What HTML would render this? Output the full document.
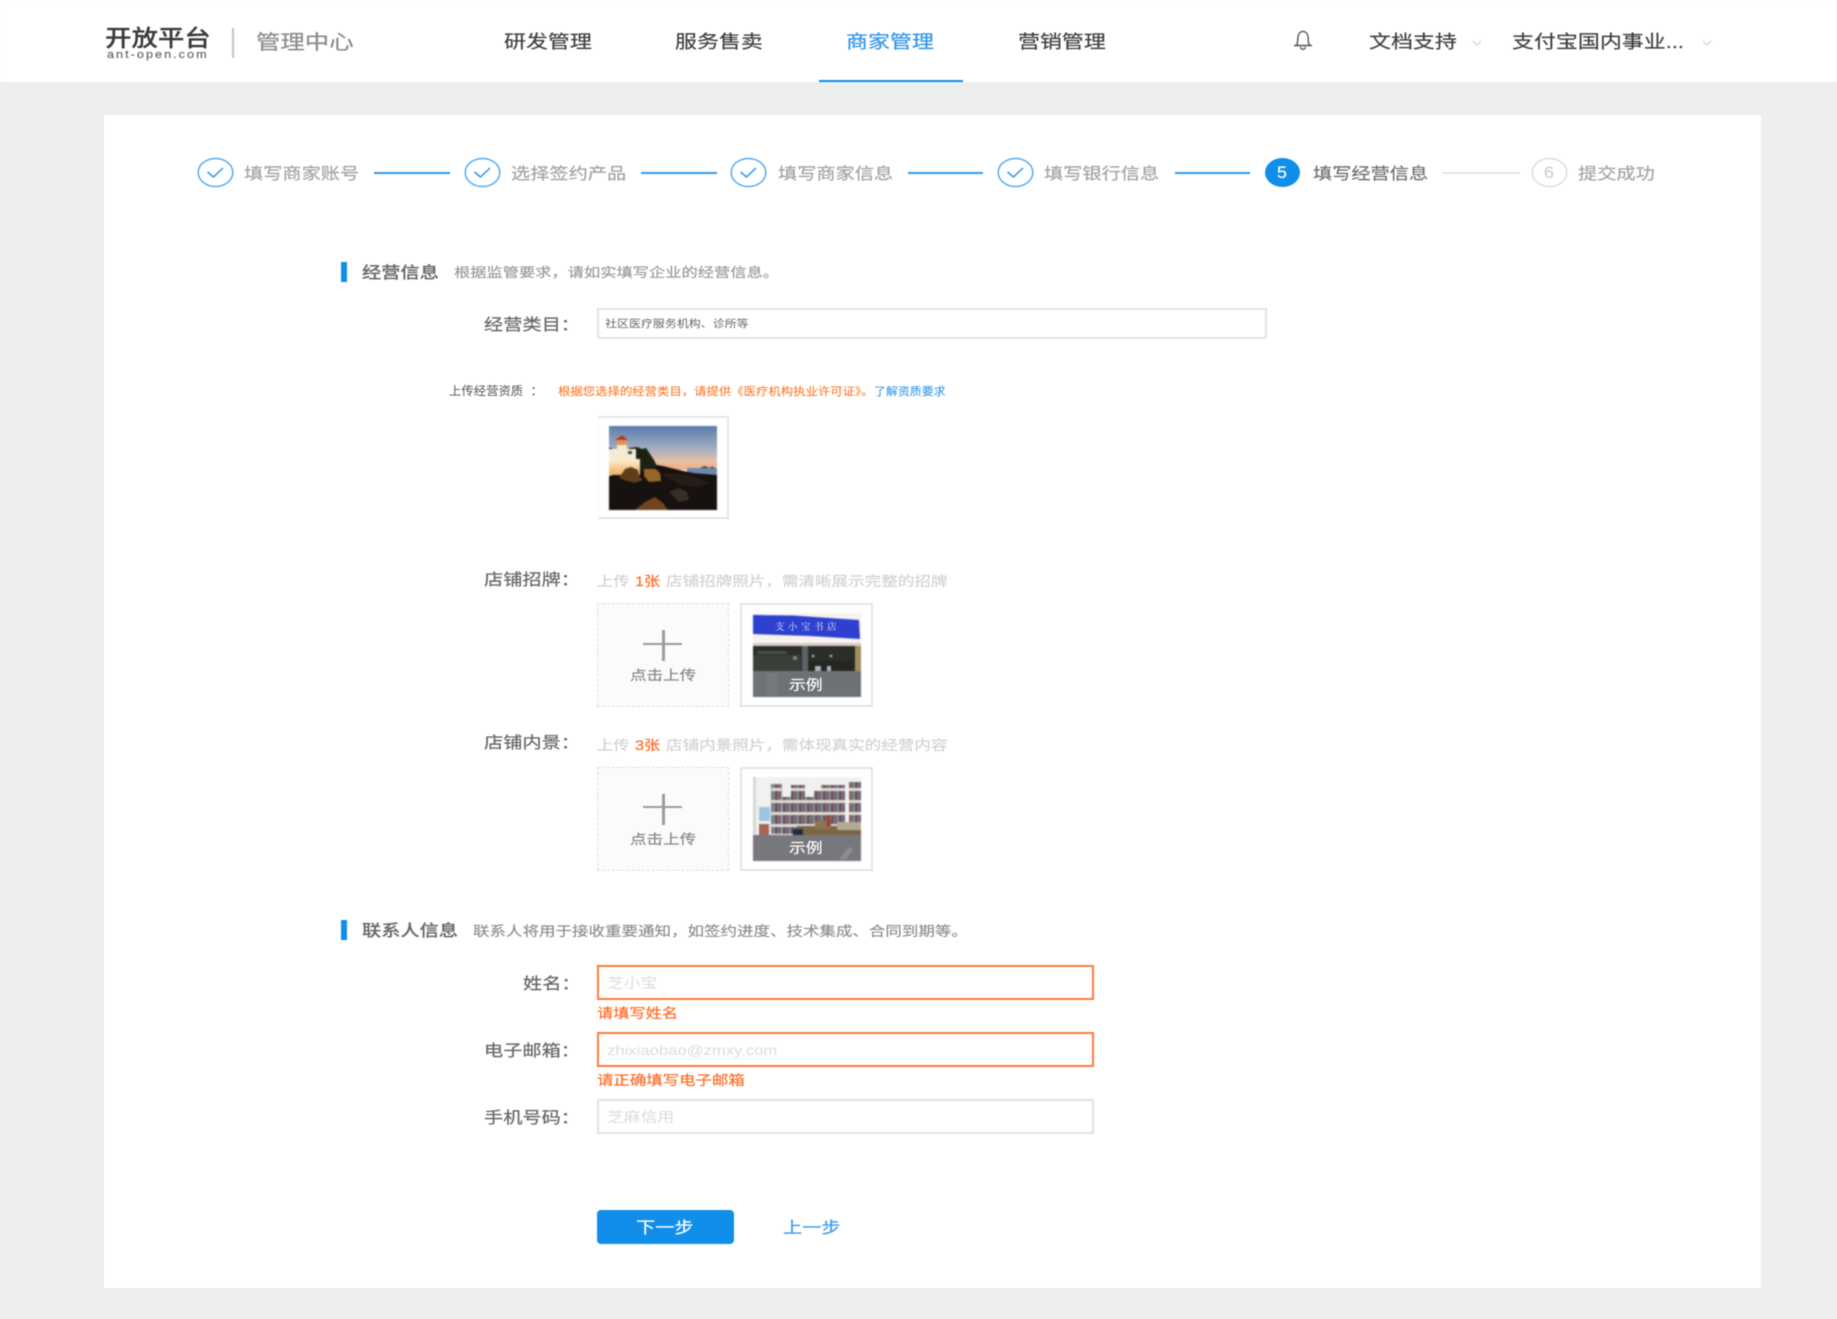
<!DOCTYPE html>
<html lang="zh-CN">
<head>
<meta charset="utf-8">
<title>开放平台 管理中心</title>
<style>
html,body{margin:0;padding:0;width:1837px;height:1319px;overflow:hidden;background:#edefef;}
body{position:relative;font-family:"Liberation Sans","Noto Sans CJK SC",sans-serif;color:#666;}
#wrap{position:absolute;left:0;top:0;width:1837px;height:1319px;filter:blur(.4px);}
.b{position:absolute;box-sizing:border-box;}
.t{position:absolute;white-space:nowrap;line-height:1;transform-origin:0 50%;transform:scaleX(1.2);-webkit-text-stroke:.18px currentColor;}
.nav{font-size:18px;color:#3f3f3f;transform:scaleX(1.22);}
.st{font-size:16px;color:#a3a3a3;}
.ln{position:absolute;top:172px;height:2px;background:#2f9bec;}
.lab{font-size:16px;color:#666;}
.ph{font-size:14px;color:#dcdcdc;-webkit-text-stroke:0;}
.err{font-size:13.5px;color:#ff6a26;}
.thin{-webkit-text-stroke:0;}
.ipt{position:absolute;left:597px;width:497px;height:35px;box-sizing:border-box;background:#fff;}
.e{border:2px solid #ff7a3e;}
.n{border:2px solid #e2e2e2;}
svg{position:absolute;display:block;}
.img{filter:blur(.55px);}
</style>
</head>
<body>
<div id="wrap">
<!-- header -->
<div class="b" style="left:0;top:0;width:1837px;height:82px;background:#fff;"></div>
<div class="b" style="left:819px;top:80px;width:144px;height:2px;background:#108ee9;"></div>
<span class="t" style="left:105px;top:27px;font-size:23px;color:#3a3a3a;font-weight:500;transform:scaleX(1.15);">开放平台</span>
<span class="t" style="left:107px;top:49.500px;font-size:11px;color:#666;letter-spacing:1.760px;transform:scaleX(1.15);">ant-open.com</span>
<div class="b" style="left:232px;top:28px;width:2px;height:30px;background:#c4c4c4;"></div>
<span class="t" style="left:256px;top:32.500px;font-size:20px;color:#8a8a8a;transform:scaleX(1.22);">管理中心</span>
<span class="t nav" style="left:504px;top:32.500px;">研发管理</span>
<span class="t nav" style="left:674.500px;top:32.500px;">服务售卖</span>
<span class="t nav" style="left:846px;top:32.500px;color:#2f94ea;">商家管理</span>
<span class="t nav" style="left:1017.500px;top:32.500px;">营销管理</span>
<svg style="left:1291px;top:29px;" width="24" height="22" viewBox="0 0 24 22" fill="none" stroke="#555" stroke-width="1.4"><path d="M3 16.500h18M5 16.500c1.600-1.500 1.800-3.200 1.800-6.200C6.800 5 9 2.400 12 2.400s5.200 2.600 5.200 7.900c0 3 .2 4.700 1.800 6.200"/><path d="M9.500 18c.4 1.600 1.300 2.300 2.500 2.300s2.100-.7 2.500-2.300"/></svg>
<span class="t nav" style="left:1369px;top:32.500px;">文档支持</span>
<svg style="left:1471px;top:39px;" width="12" height="8" viewBox="0 0 12 8" fill="none" stroke="#c8c8c8" stroke-width="1.100"><path d="M2 2l4 4 4-4"/></svg>
<span class="t nav" style="left:1512px;top:32.500px;">支付宝国内事业...</span>
<svg style="left:1701px;top:39px;" width="12" height="8" viewBox="0 0 12 8" fill="none" stroke="#c8c8c8" stroke-width="1.100"><path d="M2 2l4 4 4-4"/></svg>

<!-- card -->
<div class="b" style="left:103.500px;top:115px;width:1657.500px;height:1173px;background:#fff;"></div>

<!-- steps -->
<svg style="left:197px;top:157px;" width="38" height="31" viewBox="0 0 38 31" fill="none"><ellipse cx="18.500" cy="15.500" rx="17.300" ry="14" stroke="#55acef" stroke-width="1.500"/><path d="M10.500 15l6 5 9.500-9" stroke="#2f95ea" stroke-width="1.500"/></svg>
<span class="t st" style="left:244px;top:166.500px;">填写商家账号</span>
<div class="ln" style="left:374px;width:76px;"></div>
<svg style="left:463.500px;top:157px;" width="38" height="31" viewBox="0 0 38 31" fill="none"><ellipse cx="18.500" cy="15.500" rx="17.300" ry="14" stroke="#55acef" stroke-width="1.500"/><path d="M10.500 15l6 5 9.500-9" stroke="#2f95ea" stroke-width="1.500"/></svg>
<span class="t st" style="left:510.500px;top:166.500px;">选择签约产品</span>
<div class="ln" style="left:641px;width:76px;"></div>
<svg style="left:730px;top:157px;" width="38" height="31" viewBox="0 0 38 31" fill="none"><ellipse cx="18.500" cy="15.500" rx="17.300" ry="14" stroke="#55acef" stroke-width="1.500"/><path d="M10.500 15l6 5 9.500-9" stroke="#2f95ea" stroke-width="1.500"/></svg>
<span class="t st" style="left:778px;top:166.500px;">填写商家信息</span>
<div class="ln" style="left:908px;width:75px;"></div>
<svg style="left:996.500px;top:157px;" width="38" height="31" viewBox="0 0 38 31" fill="none"><ellipse cx="18.500" cy="15.500" rx="17.300" ry="14" stroke="#55acef" stroke-width="1.500"/><path d="M10.500 15l6 5 9.500-9" stroke="#2f95ea" stroke-width="1.500"/></svg>
<span class="t st" style="left:1044px;top:166.500px;">填写银行信息</span>
<div class="ln" style="left:1175px;width:75px;"></div>
<div class="b" style="left:1264.500px;top:158px;width:35px;height:29px;border-radius:50%;background:#108ee9;"></div>
<span class="t" style="left:1276.500px;top:164px;font-size:17px;color:#fff;transform:scaleX(1.05);">5</span>
<span class="t st" style="left:1312.500px;top:166.500px;color:#707070;">填写经营信息</span>
<div class="ln" style="left:1442px;width:78px;background:#e6e6e6;"></div>
<svg style="left:1531px;top:157px;" width="38" height="31" viewBox="0 0 38 31" fill="none"><ellipse cx="18.500" cy="15.500" rx="17.300" ry="14" stroke="#dcdcdc" stroke-width="1.500"/></svg>
<span class="t" style="left:1544px;top:164px;font-size:17px;color:#cfcfcf;transform:scaleX(1.05);">6</span>
<span class="t st" style="left:1578px;top:166.500px;">提交成功</span>

<!-- section 1 -->
<div class="b" style="left:341px;top:262px;width:6px;height:20px;background:#108ee9;"></div>
<span class="t" style="left:362px;top:265.500px;font-size:16px;color:#6a6a6a;font-weight:500;">经营信息</span>
<span class="t" style="left:453.500px;top:266px;font-size:13.300px;color:#9a9a9a;transform:scaleX(1.222);">根据监管要求，请如实填写企业的经营信息。</span>

<span class="t lab" style="left:484px;top:318px;">经营类目：</span>
<div class="b" style="left:597px;top:308px;width:670px;height:31px;border:2px solid #e4e4e4;background:#fff;"></div>
<span class="t thin" style="left:605px;top:318.500px;font-size:10.500px;color:#666;transform:scaleX(1.14);">社区医疗服务机构、诊所等</span>

<span class="t thin" style="left:449px;top:384.500px;font-size:12px;color:#555;transform:scaleX(1.03);">上传经营资质</span>
<span class="t thin" style="left:530px;top:384.500px;font-size:12px;color:#555;">：</span>
<span class="t thin" style="left:558px;top:386.500px;font-size:11px;color:#ff6a10;transform:scaleX(1.125);">根据您选择的经营类目，请提供《医疗机构执业许可证》。</span>
<span class="t thin" style="left:873.500px;top:386.500px;font-size:11px;color:#1e90ea;transform:scaleX(1.085);">了解资质要求</span>

<div class="b" style="left:598px;top:416px;width:131px;height:103px;border:2px solid #e6e6e6;border-left:1px solid #f7f7f7;"></div>
<svg class="img" style="left:609px;top:426px;" width="108" height="84" viewBox="0 0 108 84">
<defs><linearGradient id="sky" x1="0" y1="0" x2="0" y2="1"><stop offset="0" stop-color="#5a7cad"/><stop offset=".5" stop-color="#a2adc0"/><stop offset=".8" stop-color="#e5c0a8"/><stop offset="1" stop-color="#f3ac7c"/></linearGradient><linearGradient id="wall" x1="0" y1="0" x2="0" y2="1"><stop offset="0" stop-color="#fdf0cf"/><stop offset="1" stop-color="#eeac66"/></linearGradient></defs>
<rect width="108" height="44" fill="url(#sky)"/>
<rect x="78" y="42" width="30" height="8" fill="#6a8bb0"/>
<path d="M91 42l5-2 4 2zM100 42l3-1.500 3 1.500z" fill="#3a3a3a"/>
<path d="M0 84V50l30-8 18-3 6 1 16 4 14 3 24 2v35z" fill="#17120f"/>
<path d="M20 22l8-1 5 2 4-1 4 6 4 6 3 6-8 4-12 2-8-10z" fill="#1b2214"/>
<path d="M0 22h3v3H0z" fill="#222"/>
<rect x="0" y="33" width="31" height="16" fill="url(#wall)"/>
<rect x="0" y="23" width="27" height="10" fill="#f2ebdc"/>
<rect x="19" y="25" width="4" height="3" fill="#4c4a4a"/>
<rect x="8" y="17" width="10" height="17" fill="#f7e9cf"/>
<rect x="8" y="14" width="10" height="5" fill="#e09755"/>
<path d="M6 14l7-5 6 5z" fill="#b23a24"/>
<path d="M10 52l6-9 6-2 7 3 1 6 4 4-8 3-8-2z" fill="#5f3c1b"/>
<path d="M35 43h12l4 4 1 8-12 1-5-6z" fill="#98662b"/>
<path d="M26 84l10-8 10-5 8 6 5 7z" fill="#6f4520"/>
<path d="M60 66l10-4 8 4 2 8-10 2z" fill="#352d26"/>
<path d="M52 48l14-1 20 4 14 6-10 4-18-2z" fill="#251e18"/>
</svg>

<!-- shop sign -->
<span class="t lab" style="left:484px;top:573px;">店铺招牌：</span>
<span class="t" style="left:597px;top:574.500px;font-size:13.500px;color:#d2d2d2;">上传</span>
<span class="t" style="left:635px;top:574.500px;font-size:13.500px;color:#ff6a26;">1张</span>
<span class="t" style="left:666px;top:574.500px;font-size:13.800px;color:#d2d2d2;">店铺招牌照片，需清晰展示完整的招牌</span>
<div class="b" style="left:597px;top:603px;width:132px;height:104px;border:1.500px dashed #dedede;background:#fbfbfb;"></div>
<div class="b" style="left:643px;top:642.500px;width:39px;height:2px;background:#9c9c9c;"></div>
<div class="b" style="left:662px;top:630px;width:3px;height:31px;background:#9c9c9c;"></div>
<span class="t" style="left:630px;top:669px;font-size:13.800px;color:#888;">点击上传</span>
<div class="b" style="left:740px;top:603px;width:133px;height:104px;border:2px solid #e4e4e4;background:#fff;"></div>
<svg class="img" style="left:753px;top:613px;" width="108" height="84" viewBox="0 0 108 84">
<rect width="108" height="84" fill="#f6f3f0"/>
<path d="M0 2l40 .5 66 4.500 1 19-50-3L0 21z" fill="#2d40cf"/>
<rect y="30" width="108" height="3" fill="#d9ccc4"/>
<rect y="33" width="108" height="25" fill="#2b2d29"/>
<rect x="49" y="33" width="6" height="25" fill="#5c6268"/>
<rect x="102" y="33" width="6" height="25" fill="#a08d5e"/>
<rect x="0" y="42" width="48" height="16" fill="#3a3f38"/>
<rect x="4" y="38" width="30" height="3" fill="#4a4e4a"/>
<rect x="56" y="48" width="45" height="10" fill="#24261f"/>
<circle cx="42" cy="45" r="2" fill="#8a8a7c"/><circle cx="60" cy="43" r="1.500" fill="#9c9c90"/><circle cx="78" cy="43" r="1.500" fill="#9c9c90"/>
<rect x="62" y="53" width="6" height="5" fill="#aab2ba"/>
<rect x="74" y="53" width="4" height="5" fill="#aab2ba"/>
<rect y="58" width="108" height="26" fill="#6e7275"/>
<rect x="14" y="60" width="10" height="22" fill="#767a7d"/>
</svg>
<span class="t thin" style="left:775px;top:622px;font-size:9.500px;color:#e8e8f6;font-family:'Noto Serif CJK SC',serif;letter-spacing:3.500px;transform:scaleX(1);">支小宝书店</span>
<span class="t" style="left:789px;top:678px;font-size:14px;color:#fff;">示例</span>

<!-- shop interior -->
<span class="t lab" style="left:484px;top:736px;">店铺内景：</span>
<span class="t" style="left:597px;top:738.500px;font-size:13.500px;color:#d2d2d2;">上传</span>
<span class="t" style="left:635px;top:738.500px;font-size:13.500px;color:#ff6a26;">3张</span>
<span class="t" style="left:666px;top:738.500px;font-size:13.800px;color:#d2d2d2;">店铺内景照片，需体现真实的经营内容</span>
<div class="b" style="left:597px;top:767px;width:132px;height:104px;border:1.500px dashed #dedede;background:#fbfbfb;"></div>
<div class="b" style="left:643px;top:806px;width:39px;height:2px;background:#9c9c9c;"></div>
<div class="b" style="left:662px;top:793.500px;width:3px;height:31px;background:#9c9c9c;"></div>
<span class="t" style="left:630px;top:832.500px;font-size:13.800px;color:#888;">点击上传</span>
<div class="b" style="left:740px;top:767px;width:133px;height:104px;border:2px solid #e4e4e4;background:#fff;"></div>
<svg class="img" style="left:753px;top:777px;" width="108" height="84" viewBox="0 0 108 84">
<defs><pattern id="bk" width="8" height="12" patternUnits="userSpaceOnUse"><rect width="8" height="12" fill="#e0dcd6"/><rect y="2" width="2" height="9" fill="#a85a5a"/><rect x="2" y="2" width="2" height="9" fill="#54728e"/><rect x="4" y="2" width="2" height="9" fill="#9a8a7c"/><rect x="6" y="2" width="2" height="9" fill="#46576a"/></pattern></defs>
<rect width="108" height="84" fill="#f1f2f0"/>
<rect x="0" width="3" height="58" fill="#d8d8d4"/>
<rect x="18" y="7" width="11" height="50" fill="url(#bk)"/>
<rect x="18" y="7" width="11" height="50" fill="none" stroke="#c9c5bf"/>
<rect x="29" y="20" width="10" height="37" fill="url(#bk)"/>
<rect x="38" y="8" width="14" height="49" fill="url(#bk)"/>
<rect x="52" y="20" width="12" height="37" fill="url(#bk)"/>
<rect x="61" y="14" width="8" height="43" fill="url(#bk)"/>
<rect x="68" y="8" width="24" height="42" fill="url(#bk)"/>
<rect x="96" y="5" width="12" height="45" fill="url(#bk)"/>
<rect x="6" y="30" width="11" height="14" fill="#9cc6e0"/>
<rect x="6" y="47" width="10" height="11" fill="#a9645a"/>
<rect x="44" y="49" width="64" height="9" fill="#7c6646"/>
<rect x="62" y="44" width="16" height="8" fill="#8d7550"/>
<rect x="84" y="45" width="24" height="8" fill="#b4ab94"/>
<rect x="74" y="38" width="3" height="12" fill="#a33b3a"/>
<rect x="40" y="52" width="10" height="6" fill="#222c3c"/>
<rect y="58" width="108" height="26" fill="#77787b"/>
<path d="M86 82l10-12 4 2-6 10z" fill="#8c8d8f"/>
</svg>
<span class="t" style="left:789px;top:841px;font-size:14px;color:#fff;">示例</span>

<!-- section 2 -->
<div class="b" style="left:341px;top:920px;width:6px;height:20px;background:#108ee9;"></div>
<span class="t" style="left:362px;top:923.500px;font-size:16px;color:#6a6a6a;font-weight:500;">联系人信息</span>
<span class="t" style="left:473px;top:925px;font-size:13.500px;color:#8f8f8f;transform:scaleX(1.222);">联系人将用于接收重要通知，如签约进度、技术集成、合同到期等。</span>

<span class="t lab" style="left:523px;top:976.500px;">姓名：</span>
<div class="ipt e" style="top:965px;"></div>
<span class="t ph" style="left:607px;top:976px;">芝小宝</span>
<span class="t err" style="left:596.500px;top:1007px;">请填写姓名</span>

<span class="t lab" style="left:484px;top:1043.500px;">电子邮箱：</span>
<div class="ipt e" style="top:1032px;"></div>
<span class="t ph" style="left:607px;top:1043px;transform:scaleX(1.19);">zhixiaobao@zmxy.com</span>
<span class="t err" style="left:596.500px;top:1074px;font-size:13.700px;">请正确填写电子邮箱</span>

<span class="t lab" style="left:484px;top:1111px;">手机号码：</span>
<div class="ipt n" style="top:1099px;"></div>
<span class="t ph" style="left:607px;top:1110px;">芝麻信用</span>

<div class="b" style="left:597px;top:1210px;width:137px;height:34px;border-radius:4px;background:#108ee9;"></div>
<span class="t" style="left:636px;top:1220.500px;font-size:16px;color:#fff;">下一步</span>
<span class="t" style="left:783px;top:1220.500px;font-size:16px;color:#3a9cec;">上一步</span>
</div>
</body>
</html>
